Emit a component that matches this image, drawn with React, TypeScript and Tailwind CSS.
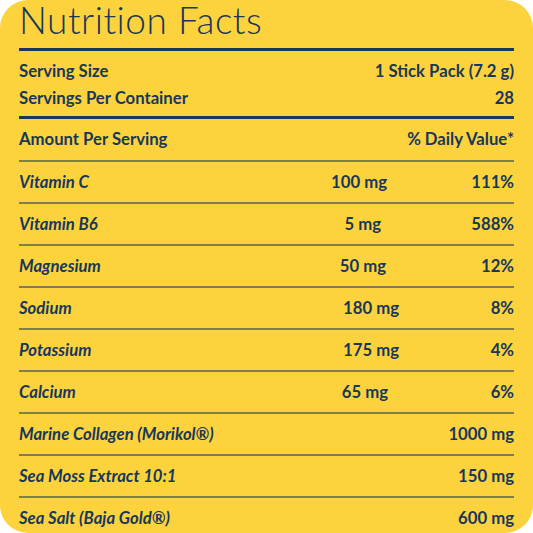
const navy = "text-[#17375b]";

type Row = { name: string; amount?: string; dv?: string; pad?: string };

const rows: Row[] = [
  { name: "Vitamin C", amount: "100 mg", dv: "111%", pad: "pr-[12px]" },
  { name: "Vitamin B6", amount: "5 mg", dv: "588%", pad: "pr-[18px]" },
  { name: "Magnesium", amount: "50 mg", dv: "12%", pad: "pr-[13px]" },
  { name: "Sodium", amount: "180 mg", dv: "8%", pad: "pr-0" },
  { name: "Potassium", amount: "175 mg", dv: "4%", pad: "pr-0" },
  { name: "Calcium", amount: "65 mg", dv: "6%", pad: "pr-[11px]" },
  { name: "Marine Collagen (Morikol®)", dv: "1000 mg" },
  { name: "Sea Moss Extract 10:1", dv: "150 mg" },
  { name: "Sea Salt (Baja Gold®)", dv: "600 mg" },
];

export default function App() {
  return (
    <div className="h-[533px] w-[533px] bg-white">
      <div
        className={`h-[533px] w-[533px] overflow-hidden rounded-[28px] bg-[#fdd33d] px-[19px] ${navy}`}
        style={{ fontFamily: "Lato, 'Liberation Sans', sans-serif" }}
      >
        <div className="h-[48px]">
          <h1 className="text-[37px] leading-[40px] font-light tracking-[0.5px]">
            Nutrition Facts
          </h1>
        </div>

        {/* serving info */}
        <div className="border-y-[3px] border-[#17375b] pt-[7px] pb-[4px] text-[16.7px] leading-[27px] font-bold">
          <div className="flex justify-between">
            <span>Serving Size</span>
            <span>1 Stick Pack (7.2 g)</span>
          </div>
          <div className="flex justify-between">
            <span>Servings Per Container</span>
            <span>28</span>
          </div>
        </div>

        <div className="flex h-[41px] items-center justify-between text-[16.7px] font-bold">
          <span>Amount Per Serving</span>
          <span>% Daily Value*</span>
        </div>

        {rows.map((r) => (
          <div
            key={r.name}
            className="grid h-[42px] grid-cols-[1fr_150px_115px] items-center border-t-2 border-[#17375b]/55 pt-[1px] text-[16.7px] font-bold"
          >
            <span className="italic">{r.name}</span>
            <span className={`text-right ${r.pad ?? ""}`}>{r.amount}</span>
            <span className="text-right">{r.dv}</span>
          </div>
        ))}
      </div>
    </div>
  );
}
